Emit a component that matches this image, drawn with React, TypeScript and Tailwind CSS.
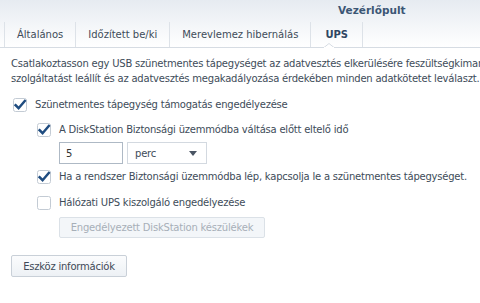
import React from 'react';

const font = { fontFamily: '"DejaVu Sans", Verdana, sans-serif' };

const Check: React.FC<{ checked?: boolean }> = ({ checked }) => (
  <svg width="14" height="14" viewBox="0 0 14 14" className="shrink-0">
    <rect x="0.5" y="0.5" width="13" height="13" rx="2" fill="#fff" stroke="#c3cbd4" />
    {checked && (
      <path d="M2.6 7.2 L5.6 10.2 L11.8 3" fill="none" stroke="#1f4c80" strokeWidth="2.5" strokeLinecap="square" />
    )}
  </svg>
);

const CheckRow: React.FC<{ checked?: boolean; label: string; className?: string }> = ({ checked, label, className }) => (
  <div className={`flex items-center gap-[8px] h-[18px] ${className ?? ''}`}>
    <Check checked={checked} />
    <span className="leading-[18px] whitespace-nowrap">{label}</span>
  </div>
);

const tabs = ['Általános', 'Időzített be/ki', 'Merevlemez hibernálás', 'UPS'];

const App: React.FC = () => {
  return (
    <div className="w-[480px] h-[303px] overflow-hidden bg-white text-[10px] text-[#404c59]" style={font}>
      <div className="bg-gradient-to-b from-[#e6ebf1] to-white border-b border-[#d6dce3] relative">
        <div className="h-[20px] leading-[20px] pl-[338px] font-bold text-[10.5px] text-[#3b5675] whitespace-nowrap">
          Vezérlőpult
        </div>
        <div className="flex items-end h-[27px] pl-[4px]">
          {tabs.map((t, i) => (
            <div
              key={t}
              className={`h-[25px] flex items-center px-[12px] whitespace-nowrap border-l border-[#dde2e8] ${
                i === tabs.length - 1 ? 'border-r font-bold text-[#2f4662] px-[14px]' : ''
              }`}
            >
              {t}
            </div>
          ))}
        </div>
        <svg width="10" height="5" viewBox="0 0 10 5" className="absolute left-[324px] bottom-[-1px]">
          <path d="M0 4.5 L5 0.5 L10 4.5" fill="#fff" stroke="#d6dce3" />
          <rect x="0" y="4" width="10" height="1" fill="#fff" />
        </svg>
      </div>

      <div className="pl-[11px] pt-[8px] tracking-[-0.22px]">
        <p className="leading-[15px] whitespace-nowrap">
          Csatlakoztasson egy USB szünetmentes tápegységet az adatvesztés elkerülésére feszültségkimaradás esetén.
          <br />
          szolgáltatást leállít és az adatvesztés megakadályozása érdekében minden adatkötetet leválaszt.
        </p>

        <CheckRow checked label="Szünetmentes tápegység támogatás engedélyezése" className="mt-[10px] ml-[2px]" />

        <div className="ml-[26px]">
          <CheckRow checked label="A DiskStation Biztonsági üzemmódba váltása előtt eltelő idő" className="mt-[7px]" />
          <div className="flex gap-[4px] mt-[3px] ml-[22px]">
            <div className="w-[64px] h-[22px] border border-[#aeb9c5] flex items-center pl-[6px] text-[#333]">5</div>
            <div className="w-[80px] h-[22px] border border-[#d3d9e0] flex items-center justify-between pl-[7px] pr-[9px]">
              <span>perc</span>
              <svg width="8" height="5" viewBox="0 0 8 5">
                <path d="M0 0 L8 0 L4 5 Z" fill="#4a5563" />
              </svg>
            </div>
          </div>
          <CheckRow
            checked
            label="Ha a rendszer Biztonsági üzemmódba lép, kapcsolja le a szünetmentes tápegységet."
            className="mt-[4px]"
          />
          <CheckRow label="Hálózati UPS kiszolgáló engedélyezése" className="mt-[8px]" />
          <button className="mt-[5px] ml-[22px] w-[206px] h-[21px] rounded-[2px] border border-[#dbe1e7] bg-[#f3f6f9] text-[#a7afb8] text-[10px] flex items-center justify-center tracking-[-0.2px]" style={font}>
            Engedélyezett DiskStation készülékek
          </button>
        </div>

        <button className="mt-[17px] w-[116px] h-[22px] rounded-[2px] border border-[#c9d0d8] bg-gradient-to-b from-[#fbfcfd] to-[#edf1f5] text-[#3e4956] text-[10px] flex items-center justify-center" style={font}>
          Eszköz információk
        </button>
      </div>
    </div>
  );
};

export default App;
